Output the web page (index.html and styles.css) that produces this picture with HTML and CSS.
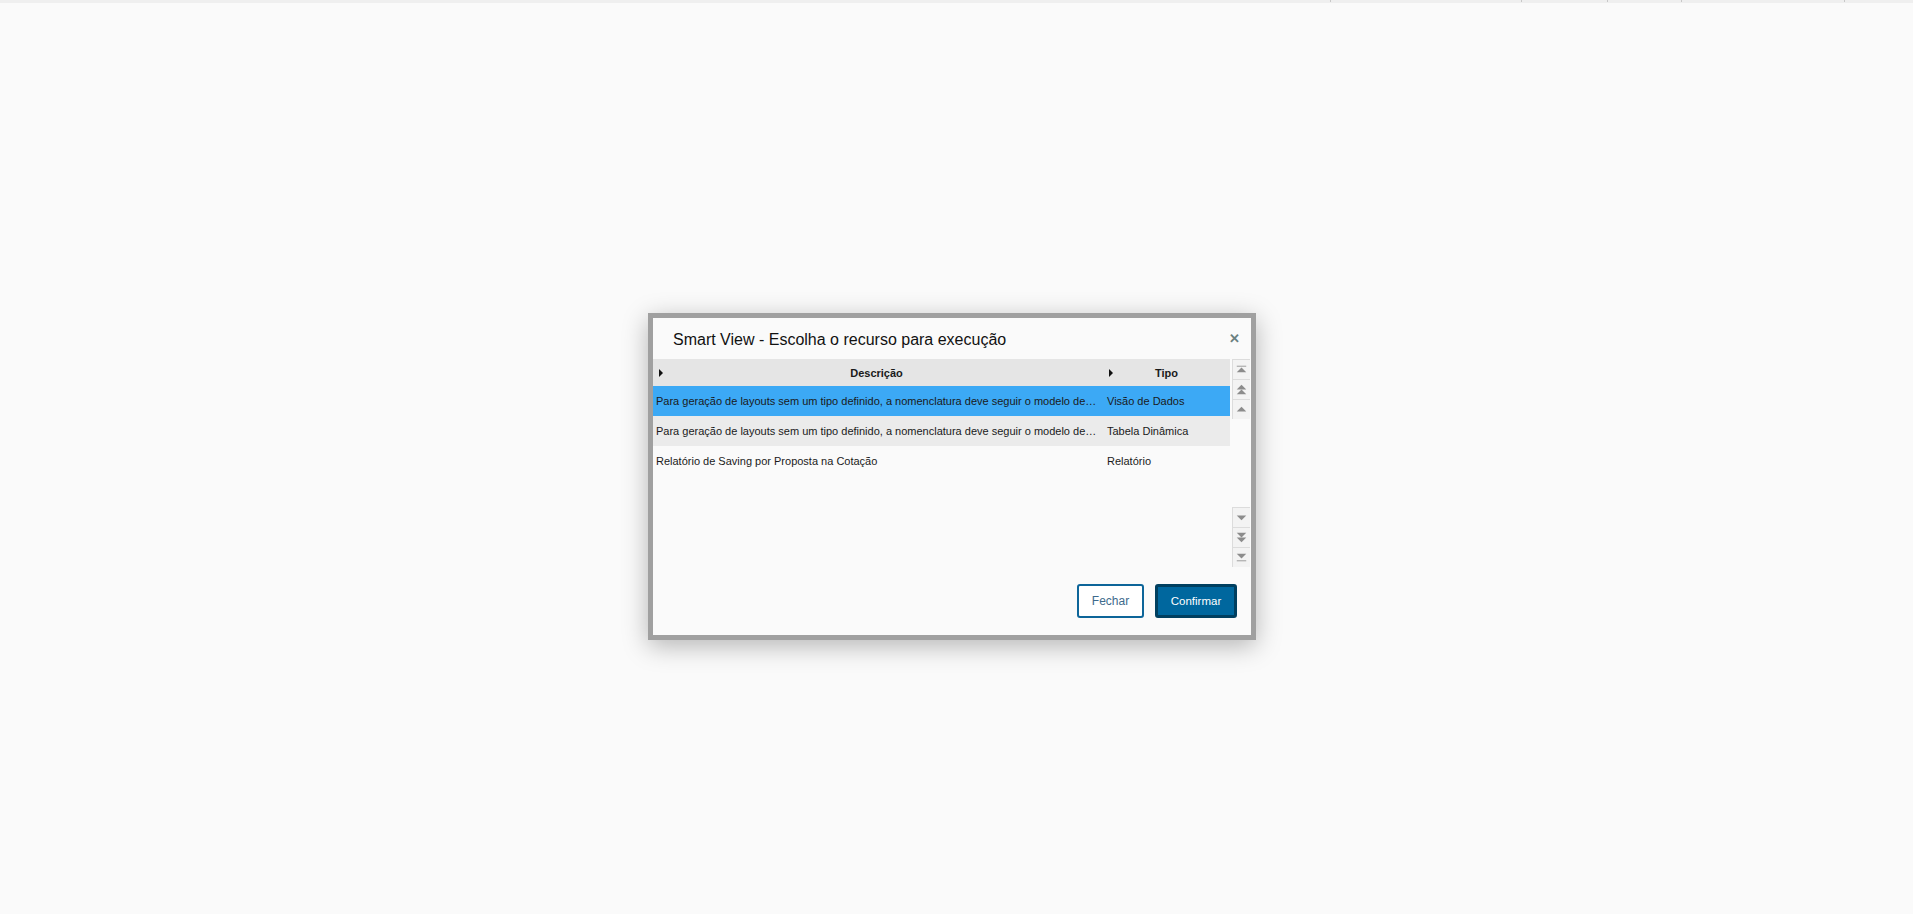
FILE: index.html
```html
<!DOCTYPE html>
<html lang="pt-BR">
<head>
  <meta charset="UTF-8">
  <title>Smart View</title>
  <link rel="stylesheet" href="styles.css">
</head>
<body>
  <div class="topbar">
    <span class="seg seg-main"></span>
    <span class="seg" style="width:191px"></span>
    <span class="seg" style="width:86px"></span>
    <span class="seg" style="width:74px"></span>
    <span class="seg" style="width:163px"></span>
  </div>

  <div class="overlay">
    <div class="dialog">
      <div class="dialog-header">
        <h2 class="dialog-title">Smart View - Escolha o recurso para execução</h2>
        <span class="close">&#x2715;</span>
      </div>

      <div class="grid-area">
        <div class="grid">
          <div class="row head">
            <div class="cell desc"><span class="caret"></span>Descrição</div>
            <div class="cell tipo"><span class="caret"></span>Tipo</div>
          </div>
          <div class="row selected">
            <div class="cell desc">Para geração de layouts sem um tipo definido, a nomenclatura deve seguir o modelo de…</div>
            <div class="cell tipo">Visão de Dados</div>
          </div>
          <div class="row alt">
            <div class="cell desc">Para geração de layouts sem um tipo definido, a nomenclatura deve seguir o modelo de…</div>
            <div class="cell tipo">Tabela Dinâmica</div>
          </div>
          <div class="row">
            <div class="cell desc">Relatório de Saving por Proposta na Cotação</div>
            <div class="cell tipo">Relatório</div>
          </div>
        </div>

        <div class="scroller">
          <div class="scroll-group">
            <button class="sbtn"><svg viewBox="0 0 18 20"><rect x="4" y="6" width="10" height="1" fill="#999"/><polygon points="9,8 14,13 4,13" fill="#8c8c8c"/></svg></button>
            <button class="sbtn"><svg viewBox="0 0 18 20"><polygon points="9,5 14,10 4,10" fill="#8c8c8c"/><polygon points="9,10 14,15 4,15" fill="#8c8c8c"/></svg></button>
            <button class="sbtn"><svg viewBox="0 0 18 20"><polygon points="9,7 14,12 4,12" fill="#8c8c8c"/></svg></button>
          </div>
          <div class="scroll-group">
            <button class="sbtn"><svg viewBox="0 0 18 20"><polygon points="4,8 14,8 9,13" fill="#8c8c8c"/></svg></button>
            <button class="sbtn"><svg viewBox="0 0 18 20"><polygon points="4,5 14,5 9,10" fill="#8c8c8c"/><polygon points="4,10 14,10 9,15" fill="#8c8c8c"/></svg></button>
            <button class="sbtn"><svg viewBox="0 0 18 20"><polygon points="4,6 14,6 9,11" fill="#8c8c8c"/><rect x="4" y="13" width="10" height="1" fill="#999"/></svg></button>
          </div>
        </div>
      </div>

      <div class="dialog-footer">
        <button class="btn btn-outline">Fechar</button>
        <button class="btn btn-primary">Confirmar</button>
      </div>
    </div>
  </div>
</body>
</html>
```

FILE: styles.css
```css
body {
  font-family: "Liberation Sans", Arial, sans-serif;
  background-color: #fafafa;
  color: #1e1e1e;
  margin: 0;
  padding: 0;
  height: 100vh;
  overflow: hidden;
}
.topbar {
  display: flex;
  height: 3px;
  background-color: #efefef;
}
.seg {
  display: block;
  height: 2px;
  border-right: 1px solid #c8c8c8;
  box-sizing: border-box;
}
.seg-main {
  width: 1331px;
}
.overlay {
  padding: 310px 0 0 648px;
}
.dialog {
  width: 598px;
  height: 317px;
  border: 5px solid #a0a0a0;
  background-color: #fafafa;
  box-shadow: 0 6px 24px rgba(0, 0, 0, 0.28);
  display: flex;
  flex-direction: column;
}
.dialog-header {
  height: 41px;
  display: flex;
  align-items: center;
  justify-content: space-between;
  padding: 0 11px 0 20px;
}
.dialog-title {
  margin: 2px 0 0;
  font-size: 16px;
  font-weight: normal;
  color: #111;
}
.close {
  font-size: 13px;
  color: #6a8080;
  font-weight: bold;
  margin-top: -1px;
}
.grid-area {
  display: flex;
  height: 209px;
}
.grid {
  width: 577px;
  font-size: 11px;
  color: #1a1a1a;
}
.row {
  display: flex;
  height: 30px;
  align-items: center;
}
.row.head {
  height: 27px;
  background-color: #e5e5e5;
  font-weight: bold;
}
.row.selected {
  background-color: #3ca9f5;
}
.row.alt {
  background-color: #ebebeb;
}
.cell {
  white-space: nowrap;
  overflow: hidden;
  box-sizing: border-box;
}
.cell.desc {
  width: 450px;
  padding: 0 6px 0 3px;
}
.cell.tipo {
  width: 127px;
  padding: 0 4px;
}
.head .cell {
  position: relative;
  text-align: center;
}
.caret {
  position: absolute;
  left: 6px;
  top: 2px;
  width: 0;
  height: 0;
  border-top: 4px solid transparent;
  border-bottom: 4px solid transparent;
  border-left: 4px solid #111;
}
.scroller {
  margin-left: 2px;
  width: 18px;
  display: flex;
  flex-direction: column;
  justify-content: space-between;
  padding-bottom: 1px;
}
.scroll-group {
  display: flex;
  flex-direction: column;
}
.sbtn {
  width: 18px;
  height: 20px;
  padding: 0;
  margin: 0;
  border: none;
  border-top: 1px solid #dcdcdc;
  border-left: 1px solid #dcdcdc;
  background-color: #f3f3f3;
  display: block;
}
.sbtn svg {
  width: 17px;
  height: 19px;
  display: block;
}
.dialog-footer {
  display: flex;
  justify-content: flex-end;
  gap: 11px;
  padding: 16px 14px 0 0;
}
.btn {
  height: 34px;
  font-family: "Liberation Sans", Arial, sans-serif;
  font-size: 12px;
  border-radius: 3px;
  box-sizing: border-box;
  cursor: pointer;
}
.btn-outline {
  width: 67px;
  border: 2px solid #0d6599;
  background-color: #fff;
  color: #3d6a8c;
}
.btn-primary {
  width: 82px;
  border: 3px solid #003f5f;
  background-color: #00679e;
  color: #fff;
  font-size: 11.5px;
}
```
